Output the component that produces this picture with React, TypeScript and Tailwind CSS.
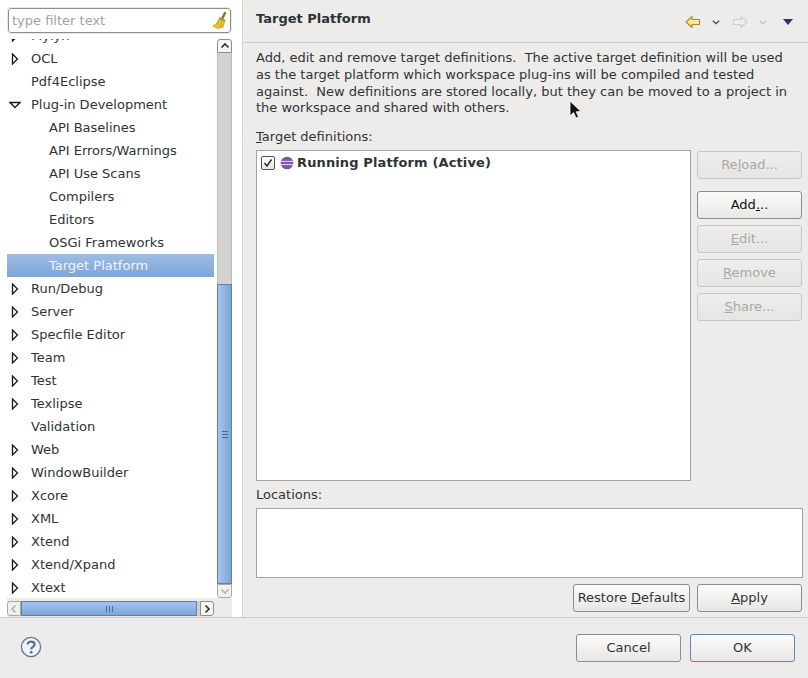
const treeItems = [
  { label: 'Mylyn', level: 0, arrow: 'right' },
  { label: 'OCL', level: 0, arrow: 'right' },
  { label: 'Pdf4Eclipse', level: 0 },
  { label: 'Plug-in Development', level: 0, arrow: 'down' },
  { label: 'API Baselines', level: 1 },
  { label: 'API Errors/Warnings', level: 1 },
  { label: 'API Use Scans', level: 1 },
  { label: 'Compilers', level: 1 },
  { label: 'Editors', level: 1 },
  { label: 'OSGi Frameworks', level: 1 },
  { label: 'Target Platform', level: 1, selected: true },
  { label: 'Run/Debug', level: 0, arrow: 'right' },
  { label: 'Server', level: 0, arrow: 'right' },
  { label: 'Specfile Editor', level: 0, arrow: 'right' },
  { label: 'Team', level: 0, arrow: 'right' },
  { label: 'Test', level: 0, arrow: 'right' },
  { label: 'Texlipse', level: 0, arrow: 'right' },
  { label: 'Validation', level: 0 },
  { label: 'Web', level: 0, arrow: 'right' },
  { label: 'WindowBuilder', level: 0, arrow: 'right' },
  { label: 'Xcore', level: 0, arrow: 'right' },
  { label: 'XML', level: 0, arrow: 'right' },
  { label: 'Xtend', level: 0, arrow: 'right' },
  { label: 'Xtend/Xpand', level: 0, arrow: 'right' },
  { label: 'Xtext', level: 0, arrow: 'right' },
];

function TreeArrow({ dir }: { dir?: string }) {
  if (dir === 'right') {
    return (
      <svg width="8" height="12" viewBox="0 0 8 12" className="block">
        <path d="M1.5 1 L6.5 6 L1.5 11 Z" fill="#fff" stroke="#1a1a1a" strokeWidth="1.3" />
      </svg>
    );
  }
  if (dir === 'down') {
    return (
      <svg width="12" height="8" viewBox="0 0 12 8" className="block">
        <path d="M1 1.5 L11 1.5 L6 6.5 Z" fill="#fff" stroke="#1a1a1a" strokeWidth="1.3" />
      </svg>
    );
  }
  return null;
}

function Chevron({ dir, color = '#2e3436' }: { dir: 'up' | 'down' | 'left' | 'right'; color?: string }) {
  const paths = {
    up: 'M1.5 6.5 L5 3 L8.5 6.5',
    down: 'M1.5 3.5 L5 7 L8.5 3.5',
    left: 'M6.5 1.5 L3 5 L6.5 8.5',
    right: 'M3.5 1.5 L7 5 L3.5 8.5',
  };
  return (
    <svg width="10" height="10" viewBox="0 0 10 10" className="block">
      <path d={paths[dir]} fill="none" stroke={color} strokeWidth="1.7" />
    </svg>
  );
}

function SmallChevron({ color }: { color: string }) {
  return (
    <svg width="8" height="5" viewBox="0 0 8 5" className="block">
      <path d="M0.8 0.8 L4 3.8 L7.2 0.8" fill="none" stroke={color} strokeWidth="1.2" />
    </svg>
  );
}

function Btn({ children, disabled, className = '' }: { children: React.ReactNode; disabled?: boolean; className?: string }) {
  const look = disabled
    ? 'border-[#c9c7c3] text-[#a9a8a5] from-[#efeeec] to-[#e6e5e3]'
    : 'border-[#8f8d89] text-[#2e3436] from-[#fbfbfa] to-[#e8e7e5]';
  return (
    <div className={`h-[28px] flex items-center justify-center rounded-[3px] border bg-gradient-to-b ${look} ${className}`}>
      <span>{children}</span>
    </div>
  );
}

function BroomIcon() {
  return (
    <svg width="16" height="18" viewBox="0 0 16 18" className="block">
      <path d="M10.5 6 L13 1" stroke="#9a6a2c" strokeWidth="2.4" strokeLinecap="round" />
      <path d="M8 5.5 L13 8 L11 15 L5.5 16.5 L1 14 L4.5 11.5 Z" fill="#f2c630" stroke="#c8961a" strokeWidth="0.8" />
      <path d="M8 5.5 L13 8 L12.4 9.8 L7 7.4 Z" fill="#8f9a3c" />
      <path d="M7 9 L5 14 M10 10 L8 15" stroke="#c8961a" strokeWidth="0.8" />
    </svg>
  );
}

function BackArrow() {
  return (
    <svg width="16" height="14" viewBox="0 0 16 14" className="block">
      <defs>
        <linearGradient id="backFill" x1="0" y1="0" x2="0" y2="1">
          <stop offset="0" stopColor="#fff4c8" />
          <stop offset="1" stopColor="#f8d77a" />
        </linearGradient>
      </defs>
      <path d="M1 7 L7 1.5 L7 4.5 L14.5 4.5 L14.5 9.5 L7 9.5 L7 12.5 Z" fill="url(#backFill)" stroke="#bd8517" strokeWidth="1.1" strokeLinejoin="round" />
    </svg>
  );
}

function ForwardArrow() {
  return (
    <svg width="16" height="14" viewBox="0 0 16 14" className="block">
      <path d="M15 7 L9 1.5 L9 4.5 L1.5 4.5 L1.5 9.5 L9 9.5 L9 12.5 Z" fill="#efeeec" stroke="#cfcecb" strokeWidth="1.1" strokeLinejoin="round" />
    </svg>
  );
}

function PlatformIcon() {
  return (
    <svg width="14" height="14" viewBox="0 0 14 14" className="block">
      <circle cx="7" cy="7" r="6.3" fill="#7a5aa6" />
      <path d="M0.5 5.4 H13.5 M0.5 8.6 H13.5" stroke="#e4dcf0" strokeWidth="1" />
    </svg>
  );
}

function HelpIcon() {
  return (
    <svg width="22" height="22" viewBox="0 0 22 22" className="block">
      <circle cx="11" cy="11" r="9.6" fill="#f1f3f6" stroke="#64789c" strokeWidth="1.4" />
      <path d="M7.6 8.6 C7.6 4.6 14.6 4.8 14.6 8.6 C14.6 11 11.2 10.8 11.2 13.4" fill="none" stroke="#5d6f92" strokeWidth="2.2" />
      <circle cx="11.2" cy="16.3" r="1.4" fill="#5d6f92" />
    </svg>
  );
}

function Sidebar() {
  return (
    <div className="w-[243px] h-full flex flex-col bg-white border-r border-[#d6d5d2] pl-[7px] pr-[10px] pt-[8px]">
      {/* filter box */}
      <div className="h-[25px] w-[223px] ml-px flex items-center justify-between rounded-[3px] border border-[#8f8d89] bg-white pl-[3px] pr-[2px] text-[#a4a3a0] outline outline-1 outline-[#e9e8e6]">
        <span>type filter text</span>
        <BroomIcon />
      </div>

      <div className="mt-[6px] flex flex-1 min-h-0">
        {/* tree */}
        <div className="flex-1 min-w-0 overflow-hidden mr-[3px]">
          <div className="-mt-[15px]">
            {treeItems.map((item) => (
              <div
                key={item.label}
                className={`h-[23px] flex items-center ${item.selected ? 'bg-gradient-to-b from-[#9dbde5] to-[#7ea5d6] text-[#eef3fa]' : 'text-[#2e3436]'}`}
              >
                <div className="w-[16px] mr-[8px] shrink-0 flex items-center justify-center">
                  <TreeArrow dir={item.arrow} />
                </div>
                <span className={item.level === 1 ? 'pl-[18px]' : ''}>{item.label}</span>
              </div>
            ))}
          </div>
        </div>

        {/* vertical scrollbar */}
        <div className="w-[15px] flex flex-col">
          <div className="h-[14px] flex items-center justify-center rounded-t-[3px] border border-[#8f8d89] bg-[#f6f5f4]">
            <Chevron dir="up" />
          </div>
          <div className="h-[231px] bg-[#d3d2cf] border-x border-[#bdbcb9]" />
          <div className="flex-1 flex items-center justify-center border border-[#5f7fb0] bg-gradient-to-r from-[#a5c4ea] to-[#7ea6d8]">
            <div className="flex flex-col gap-[2px]">
              <span className="block w-[6px] h-px bg-[#4c6a99]" />
              <span className="block w-[6px] h-px bg-[#4c6a99]" />
              <span className="block w-[6px] h-px bg-[#4c6a99]" />
            </div>
          </div>
          <div className="h-[14px] flex items-center justify-center rounded-b-[3px] border border-[#a9a8a4] bg-[#f1f0ee]">
            <Chevron dir="down" color="#b5b4b1" />
          </div>
        </div>
      </div>

      {/* horizontal scrollbar */}
      <div className="h-[19px] shrink-0 flex items-end pb-[1px] pr-[18px] bg-[#ecebe9]">
        <div className="h-[15px] w-[14px] flex items-center justify-center rounded-l-[3px] border border-[#a9a8a4] bg-[#f1f0ee]">
          <Chevron dir="left" color="#b5b4b1" />
        </div>
        <div className="h-[15px] w-[176px] flex items-center justify-center gap-[2px] border border-[#5f7fb0] bg-gradient-to-b from-[#a5c4ea] to-[#7ea6d8]">
          <span className="w-px h-[6px] bg-[#4c6a99]" />
          <span className="w-px h-[6px] bg-[#4c6a99]" />
          <span className="w-px h-[6px] bg-[#4c6a99]" />
        </div>
        <div className="h-[15px] flex-1 bg-[#d3d2cf]" />
        <div className="h-[15px] w-[14px] flex items-center justify-center rounded-r-[3px] border border-[#8f8d89] bg-[#f6f5f4]">
          <Chevron dir="right" />
        </div>
      </div>
    </div>
  );
}

function MainPane() {
  return (
    <div className="flex-1 min-w-0 h-full flex flex-col text-[#2e3436]">
      {/* title bar */}
      <div className="h-[43px] shrink-0 border-b border-[#cfcec9] flex items-start pl-[13px] pr-[15px]">
        <span className="font-bold mt-[9px]">Target Platform</span>
        <div className="ml-auto mt-[15px] flex items-center h-[14px]">
          <BackArrow />
          <div className="ml-[10px] w-[10px] flex justify-center">
            <SmallChevron color="#444" />
          </div>
          <div className="ml-[11px]"><ForwardArrow /></div>
          <div className="ml-[10px] w-[10px] flex justify-center">
            <SmallChevron color="#c2c1be" />
          </div>
          <svg width="10" height="6" viewBox="0 0 10 6" className="block ml-[15px]">
            <path d="M0 0 H10 L5 6 Z" fill="#3a2f66" />
          </svg>
        </div>
      </div>

      <div className="flex-1 min-h-0 pl-[13px] pr-[5px] pt-[7px] flex flex-col">
        <p className="leading-[16.8px] whitespace-pre">
          {'Add, edit and remove target definitions.  The active target definition will be used\nas the target platform which workspace plug-ins will be compiled and tested\nagainst.  New definitions are stored locally, but they can be moved to a project in\nthe workspace and shared with others.'}
        </p>

        <div className="mt-[12px] h-[16px] leading-[16px]"><u>T</u>arget definitions:</div>

        <div className="mt-[5px] flex gap-[6px] h-[331px]">
          <div className="flex-1 bg-white border border-[#a5a39e] pl-[4px] pt-[3px]">
            <div className="flex items-center h-[17px]">
              <div className="w-[14px] h-[14px] flex items-center justify-center rounded-[2px] border border-[#55534f] bg-gradient-to-b from-white to-[#e8e7e5]">
                <svg width="10" height="10" viewBox="0 0 10 10" className="block">
                  <path d="M1.5 5 L4 8 L8.5 1.5" fill="none" stroke="#2e3436" strokeWidth="1.6" />
                </svg>
              </div>
              <div className="ml-[5px]"><PlatformIcon /></div>
              <span className="ml-[3px] font-bold tracking-[0.12px]">Running Platform (Active)</span>
            </div>
          </div>
          <div className="w-[105px] mr-px pt-px flex flex-col gap-[6px]">
            <Btn disabled>Re<u>l</u>oad...</Btn>
            <Btn className="mt-[6px] !text-[#111]">Add<u>.</u>..</Btn>
            <Btn disabled><u>E</u>dit...</Btn>
            <Btn disabled><u>R</u>emove</Btn>
            <Btn disabled><u>S</u>hare...</Btn>
          </div>
        </div>

        <div className="mt-[6px] h-[16px] leading-[16px]">Locations:</div>
        <div className="mt-[5px] h-[70px] bg-white border border-[#a5a39e]" />

        <div className="mt-[6px] flex justify-end gap-[7px] pr-px">
          <Btn className="w-[117px]">Restore <u>D</u>efaults</Btn>
          <Btn className="w-[105px]"><u>A</u>pply</Btn>
        </div>
      </div>
    </div>
  );
}

export default function App() {
  return (
    <div
      className="relative w-[808px] h-[678px] overflow-hidden flex flex-col bg-[#edecea] text-[13px]"
      style={{ fontFamily: '"DejaVu Sans", sans-serif' }}
    >
      <div className="h-[618px] shrink-0 flex border-b border-[#cfcec9]">
        <Sidebar />
        <MainPane />
      </div>

      {/* dialog buttons */}
      <div className="flex-1 flex items-start pt-[16px] pl-[20px] pr-[13px] text-[#2e3436]">
        <div className="mt-[2px]"><HelpIcon /></div>
        <div className="ml-auto flex gap-[9px]">
          <Btn className="w-[105px]">Cancel</Btn>
          <Btn className="w-[105px] !border-[#5f86b5]">OK</Btn>
        </div>
      </div>

      {/* mouse pointer from the screenshot */}
      <svg width="14" height="20" viewBox="0 0 14 20" className="absolute left-[569px] top-[100px]">
        <path d="M1 1 L1 16 L4.6 12.6 L7 18 L9.6 17 L7.2 11.8 L12 11.6 Z" fill="#111" stroke="#fff" strokeWidth="0.8" />
      </svg>
    </div>
  );
}
